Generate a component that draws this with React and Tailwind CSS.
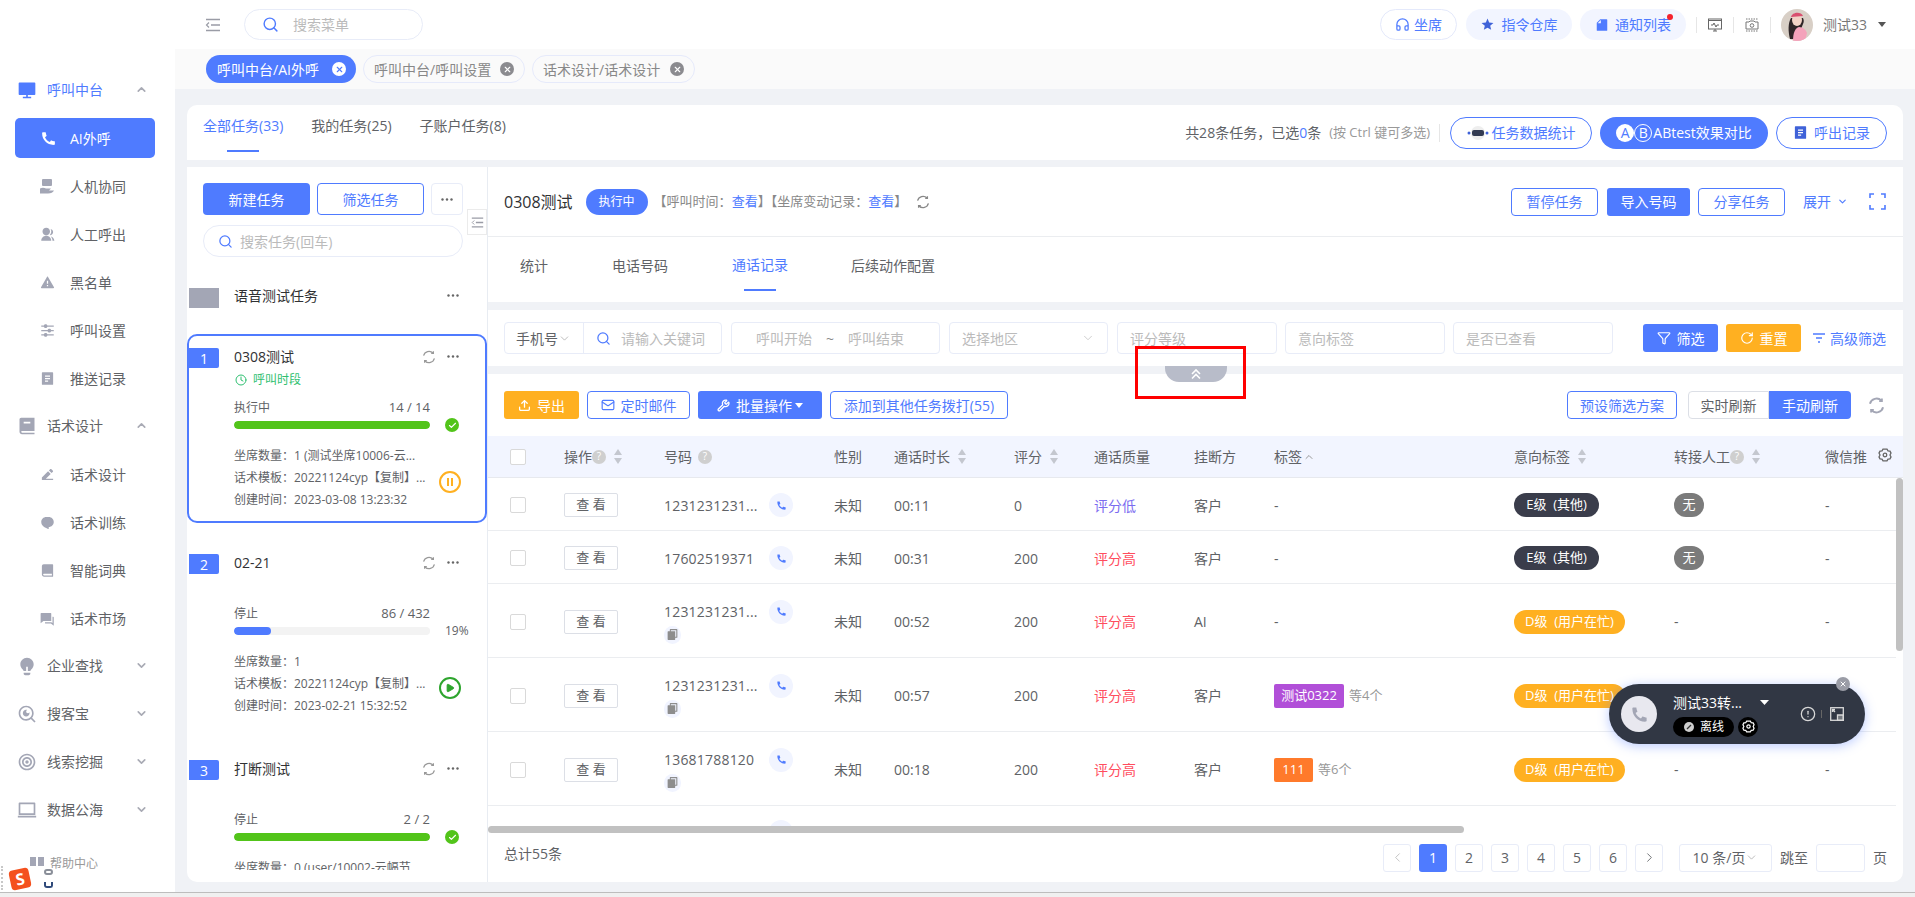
import React from "react";
import { Search, ChevronUp, ChevronDown, ChevronLeft, ChevronRight, X, Clock, Check, Play, Upload, Mail, Wrench, Filter, RotateCw, AlertCircle, Headphones } from "lucide-react";
import {
  RiComputerFill,
  RiPhoneFill,
  RiGroupFill,
  RiAlertFill,
  RiEqualizerFill,
  RiFileList2Fill,
  RiBook2Fill,
  RiEdit2Fill,
  RiChat1Fill,
  RiBookFill,
  RiQuestionAnswerFill,
  RiLightbulbFill,
  RiSearchEyeLine,
  RiFocus2Line,
  RiMacbookLine,
  RiStarSFill,
  RiFileFill,
  RiFileCopyFill,
} from "react-icons/ri";

const HandIcon = () => (
  <svg width="16" height="16" viewBox="0 0 16 16" fill="#a3a6b5">
    <rect x="3" y="1" width="10" height="7" rx="1" />
    <path d="M1 10.5c2-1 4-1 6 0h5l-2 2h5c-1 2-3 3-6 3H1z" />
  </svg>
);

const RefreshIcon = ({ size = 14, width = 1.2, color = "#999" }) => (
  <svg width={size} height={size} viewBox="0 0 14 14" fill="none" stroke={color} strokeWidth={width}>
    <path d="M1.6 5.6A5.6 5.6 0 0 1 11 3" />
    <path d="M12.4 8.4A5.6 5.6 0 0 1 3 11" />
    <path d="M11.4 1.2V3.4H9.2M2.6 12.8V10.6H4.8" />
  </svg>
);

const HexGear = ({ size = 14, color = "#666" }) => (
  <svg width={size} height={size} viewBox="0 0 14 14" fill="none" stroke={color} strokeWidth="1.3">
    <path d="M5 1.2h4l1 1.7 2 .2 1 2-1 1.9 1 1.9-1 2-2 .2-1 1.7H5l-1-1.7-2-.2-1-2L2 7 1 5.100l1-2 2-.2z" />
    <circle cx="7" cy="7" r="1.8" />
  </svg>
);

const menus = [
  { label: "呼叫中台", icon: RiComputerFill, top: true, color: "text-[#4f7bff]", open: true },
  { label: "AI外呼", icon: RiPhoneFill, active: true },
  { label: "人机协同", icon: HandIcon },
  { label: "人工呼出", icon: RiGroupFill },
  { label: "黑名单", icon: RiAlertFill },
  { label: "呼叫设置", icon: RiEqualizerFill },
  { label: "推送记录", icon: RiFileList2Fill },
  { label: "话术设计", icon: RiBook2Fill, top: true, open: true },
  { label: "话术设计", icon: RiEdit2Fill },
  { label: "话术训练", icon: RiChat1Fill },
  { label: "智能词典", icon: RiBookFill },
  { label: "话术市场", icon: RiQuestionAnswerFill },
  { label: "企业查找", icon: RiLightbulbFill, top: true },
  { label: "搜客宝", icon: RiSearchEyeLine, top: true },
  { label: "线索挖掘", icon: RiFocus2Line, top: true },
  { label: "数据公海", icon: RiMacbookLine, top: true },
];

const Sidebar = () => (
  <div className="w-[175px] h-full bg-white pt-[66px] flex flex-col shrink-0 text-[14px] text-[#606266]">
    {menus.map((m, i) => {
      const Icon = m.icon;
      if (m.active) {
        return (
          <div key={i} className="h-[48px] flex items-center">
            <div className="ml-[15px] w-[140px] h-[40px] rounded-[5px] bg-[#4f7bff] text-white flex items-center pl-[25px]">
              <Icon size={17} />
              <span className="ml-[13px]">{m.label}</span>
            </div>
          </div>
        );
      }
      if (m.top) {
        return (
          <div key={i} className={`h-[48px] flex items-center pl-[17px] pb-px ${m.color || ""}`}>
            <span className="w-[20px] flex justify-center">
              <Icon size={20} className={m.color ? "text-[#4f7bff]" : "text-[#a3a6b5]"} />
            </span>
            <span className="ml-[10px] w-[88px]">{m.label}</span>
            {m.open ? <ChevronUp size={13} strokeWidth={3} className="text-[#a9abb5]" /> : <ChevronDown size={13} strokeWidth={3} className="text-[#a9abb5]" />}
          </div>
        );
      }
      return (
        <div key={i} className="h-[48px] flex items-center pl-[39px]">
          <span className="w-[16px] flex justify-center">
            <Icon size={15} className="text-[#a3a6b5]" />
          </span>
          <span className="ml-[15px]">{m.label}</span>
        </div>
      );
    })}
    <div className="mt-[21px] ml-[30px] flex items-center text-[12px] text-[#999]">
      <span className="w-[6px] h-[9px] bg-[#a3a6b5] -mt-[6px]"></span>
      <span className="w-[6px] h-[9px] bg-[#a3a6b5] ml-[2px] -mt-[6px]"></span>
      <span className="ml-[6px]">帮助中心</span>
    </div>
  </div>
);

const CollapseIcon = ({ size = 16 }) => (
  <svg width={size} height={size} viewBox="0 0 16 16" fill="none" stroke="#9a9ca6" strokeWidth="1.6">
    <path d="M1 2.5h14M6 8h9M1 13.5h14" />
    <path d="M4 5.5L1.5 8 4 10.5" strokeWidth="1.2" />
  </svg>
);

const tabItems = [
  { label: "呼叫中台/AI外呼", w: "w-[150px]", pad: "pl-[11px]", active: true },
  { label: "呼叫中台/呼叫设置", w: "w-[162px]", pad: "pl-[10px]" },
  { label: "话术设计/话术设计", w: "w-[163px]", pad: "pl-[10px]" },
];

const TopBar = () => (
  <>
    <div className="h-[49px] bg-white flex items-center pl-[30px] pr-[29px] shrink-0">
      <CollapseIcon />
      <div className="ml-[23px] w-[179px] h-[31px] rounded-full border border-[#e8ecf8] flex items-center pl-[17px] text-[14px] text-[#bbbbbb]">
        <Search size={17} className="text-[#4f7bff]" />
        <span className="ml-[14px]">搜索菜单</span>
      </div>
      <div className="flex-1"></div>
      <div className="w-[77px] h-[31px] rounded-full border border-[#e4e9fb] flex items-center justify-center text-[14px] text-[#4f7bff]">
        <Headphones size={15} />
        <span className="ml-[4px]">坐席</span>
      </div>
      <div className="ml-[9px] w-[106px] h-[31px] rounded-full bg-[#f2f5ff] flex items-center justify-center text-[14px] text-[#4f7bff]">
        <RiStarSFill size={15} className="text-[#3f62d8]" />
        <span className="ml-[6px]">指令仓库</span>
      </div>
      <div className="ml-[8px] w-[106px] h-[31px] rounded-full bg-[#f2f5ff] flex items-center justify-center text-[14px] text-[#4f7bff] relative">
        <RiFileFill size={14} />
        <span className="ml-[6px]">通知列表</span>
        <span className="absolute right-[13px] top-[5px] w-[6px] h-[6px] rounded-full bg-[#f5222d]"></span>
      </div>
      <div className="ml-[10px] w-px h-[16px] bg-[#e6e6e6]"></div>
      <div className="w-[36px] flex justify-center">
        <svg width="14" height="14" viewBox="0 0 14 14" fill="none" stroke="#666" strokeWidth="1">
          <rect x="0.5" y="1" width="13" height="10" />
          <path d="M0.5 2.5h13M3 7h2l1-2 2 4 1-2h2M7 11v2M5 13h4" />
        </svg>
      </div>
      <div className="w-px h-[16px] bg-[#e6e6e6]"></div>
      <div className="w-[36px] flex justify-center">
        <svg width="14" height="14" viewBox="0 0 14 14" fill="none" stroke="#777" strokeWidth="1">
          <path d="M1 1h12M1 13h12" strokeDasharray="1.5 1" />
          <path d="M1 4h3l1-1h4l1 1h3v7H1z" />
          <circle cx="7" cy="7.5" r="1.8" />
        </svg>
      </div>
      <div className="w-px h-[16px] bg-[#e6e6e6]"></div>
      <div className="ml-[10px] w-[32px] h-[32px] rounded-full overflow-hidden">
        <svg width="32" height="32" viewBox="0 0 32 32">
          <rect width="32" height="32" fill="#d8cfc6" />
          <path d="M9 30c-2-8-2-16 1-21l12 0c1 2 1 4 0 6l-6 15z" fill="#2e2527" />
          <ellipse cx="16" cy="11" rx="5" ry="6" fill="#f2d3c6" />
          <path d="M10 8c1-5 10-6 12-1z" fill="#d9506f" />
          <path d="M12 32c0-8 2-13 6-14 4 0 7 3 8 6l-2 8z" fill="#f4a3bb" />
        </svg>
      </div>
      <span className="ml-[10px] text-[14px] text-[#777]">测试33</span>
      <svg className="ml-[11px]" width="8" height="5" viewBox="0 0 8 5" fill="#555"><path d="M0 0h8L4 5z" /></svg>
    </div>
    <div className="h-[40px] bg-[#fafafa] flex items-center pl-[31px] gap-[7px] shrink-0">
      {tabItems.map((t) => (
        <div
          key={t.label}
          className={`${t.w} ${t.pad} h-[28px] rounded-full flex items-center justify-between pr-[10px] text-[14px] ${
            t.active ? "bg-[#4f7bff] text-white" : "border border-[#e6eafa] text-[#888]"
          }`}
        >
          <span>{t.label}</span>
          <span className={`w-[14px] h-[14px] rounded-full flex items-center justify-center ${t.active ? "bg-white text-[#4f7bff]" : "bg-[#8b8b8f] text-white"}`}>
            <X size={9} strokeWidth={3} />
          </span>
        </div>
      ))}
    </div>
  </>
);

const PillButton = ({ w, filled, children }) => (
  <div className={`${w} h-[32px] rounded-full flex items-center justify-center text-[14px] ${filled ? "bg-[#4f7bff] text-white" : "border border-[#4f7bff] text-[#4f7bff]"}`}>
    {children}
  </div>
);

const TaskTabs = () => (
  <div className="h-[55px] bg-white rounded-t-[10px] flex items-start pl-[16px] pr-[16px] shrink-0 text-[14px] text-[#606266]">
    <div className="h-[47px] flex flex-col items-center">
      <span className="h-[40px] flex items-center text-[#4f7bff]">全部任务(33)</span>
      <span className="w-[32px] h-[2px] mt-[5px] bg-[#4f7bff]"></span>
    </div>
    <span className="ml-[28px] h-[40px] flex items-center">我的任务(25)</span>
    <span className="ml-[28px] h-[40px] flex items-center">子账户任务(8)</span>
    <div className="flex-1"></div>
    <div className="h-[55px] flex items-center">
      <span className="text-[#606266]">共28条任务，已选<span className="text-[#4f7bff]">0</span>条</span>
      <span className="ml-[8px] text-[13px] text-[#999]">(按 Ctrl 键可多选)</span>
      <span className="ml-[9px] mr-[10px] w-px h-[18px] bg-[#e6e6e6]"></span>
      <PillButton w="w-[142px]">
        <svg width="22" height="14" viewBox="0 0 22 14">
          <circle cx="11" cy="7" r="7" fill="#eeeeee" />
          <rect x="5" y="4" width="12" height="6" rx="2" fill="#333b52" />
          <circle cx="2" cy="7" r="1.5" fill="#3f62d8" />
          <circle cx="20" cy="7" r="1.5" fill="#3f62d8" />
        </svg>
        <span className="ml-[3px]">任务数据统计</span>
      </PillButton>
      <div className="w-[8px]"></div>
      <PillButton w="w-[168px]" filled>
        <span className="w-[18px] h-[18px] rounded-full bg-white text-[#4f7bff] flex items-center justify-center text-[14px]">A</span>
        <span className="w-[18px] h-[18px] rounded-full border border-white flex items-center justify-center text-[14px]">B</span>
        <span className="ml-px">ABtest效果对比</span>
      </PillButton>
      <div className="w-[8px]"></div>
      <PillButton w="w-[111px]">
        <RiFileList2Fill size={15} className="text-[#3f62d8]" />
        <span className="ml-[6px]">呼出记录</span>
      </PillButton>
    </div>
  </div>
);

const Dots = () => (
  <svg width="12" height="3" viewBox="0 0 12 3" fill="#666">
    <circle cx="1.5" cy="1.5" r="1.2" />
    <circle cx="6" cy="1.5" r="1.2" />
    <circle cx="10.5" cy="1.5" r="1.2" />
  </svg>
);

const tasks = [
  {
    no: 1,
    name: "0308测试",
    selected: true,
    state: "执行中",
    count: "14 / 14",
    percent: 100,
    color: "bg-[#52c41a]",
    line1: "坐席数量：1 (测试坐席10006-云...",
    line2: "话术模板：20221124cyp【复制】...",
    line3: "创建时间：2023-03-08 13:23:32",
    action: "pause",
  },
  {
    no: 2,
    name: "02-21",
    state: "停止",
    count: "86 / 432",
    percent: 19,
    color: "bg-[#4f7bff]",
    line1: "坐席数量：1",
    line2: "话术模板：20221124cyp【复制】...",
    line3: "创建时间：2023-02-21 15:32:52",
    action: "play",
  },
  {
    no: 3,
    name: "打断测试",
    state: "停止",
    count: "2 / 2",
    percent: 100,
    color: "bg-[#52c41a]",
    line1: "坐席数量：0 (user/10002-云幅节...",
    line2: "",
    line3: "",
  },
];

const TaskCard = ({ t }) => (
  <div className={`h-[189px] mb-[17px] rounded-[10px] border-2 pt-[12px] shrink-0 ${t.selected ? "border-[#4f7bff]" : "border-transparent"}`}>
    <div className="h-[20px] flex items-center pr-[26px]">
      <span className="w-[30px] h-[20px] rounded-r-[2px] bg-[#4f7bff] text-white text-[14px] flex items-center justify-center">{t.no}</span>
      <span className="ml-[15px] mb-[3px] flex-1 text-[14px] text-[#303133]">{t.name}</span>
      <span className="mr-[11px] mb-[2px]"><RefreshIcon /></span>
      <span className="mb-[3px] flex"><Dots /></span>
    </div>
    <div className="h-[20px] pl-[46px] pt-[4px] flex items-center text-[12px] text-[#2fbf71]">
      {t.selected && (
        <>
          <Clock size={12} />
          <span className="ml-[6px]">呼叫时段</span>
        </>
      )}
    </div>
    <div className="mt-[12px] pl-[45px] w-[241px] flex justify-between items-center h-[16px] text-[12px] text-[#606266]">
      <span>{t.state}</span>
      <span className="text-[13px]">{t.count}</span>
    </div>
    <div className="mt-[5px] pl-[45px] flex items-center h-[8px]">
      <div className="w-[196px] h-[8px] rounded-full bg-[#f3f3f3] overflow-hidden">
        <div className={`h-full rounded-full ${t.color}`} style={{ width: `${t.percent}%` }}></div>
      </div>
      {t.percent === 100 ? (
        <span className="ml-[15px] w-[14px] h-[14px] rounded-full bg-[#52c41a] text-white flex items-center justify-center">
          <Check size={9} strokeWidth={3} />
        </span>
      ) : (
        <span className="ml-[15px] text-[12px] text-[#606266]">{t.percent}%</span>
      )}
    </div>
    <div className="mt-[16px] pl-[45px] flex items-center">
      <div className="w-[205px] text-[12px] leading-[22px] text-[#606266] whitespace-nowrap">
        <div>{t.line1}</div>
        <div>{t.line2}</div>
        <div>{t.line3}</div>
      </div>
      {t.action === "pause" && (
        <span className="mt-[8px] w-[22px] h-[22px] rounded-full border-2 border-[#ffb021] flex items-center justify-center gap-[2px]">
          <span className="w-[2px] h-[8px] bg-[#ffb021]"></span>
          <span className="w-[2px] h-[8px] bg-[#ffb021]"></span>
        </span>
      )}
      {t.action === "play" && (
        <span className="mt-[8px] w-[22px] h-[22px] rounded-full border-2 border-[#2ea52e] text-[#2ea52e] flex items-center justify-center">
          <Play size={10} fill="#2ea52e" />
        </span>
      )}
    </div>
  </div>
);

const LeftPanel = () => (
  <div className="w-[300px] h-full bg-white rounded-bl-[10px] pt-[16px] shrink-0 relative flex flex-col">
    <div className="pl-[16px] flex gap-[7px] text-[14px]">
      <div className="w-[107px] h-[32px] rounded-[4px] bg-[#4f7bff] text-white flex items-center justify-center">新建任务</div>
      <div className="w-[107px] h-[32px] rounded-[4px] border border-[#4f7bff] text-[#4f7bff] flex items-center justify-center">筛选任务</div>
      <div className="w-[32px] h-[32px] rounded-[4px] border border-[#e8ecf8] flex items-center justify-center">
        <Dots />
      </div>
    </div>
    <div className="ml-[16px] mt-[10px] w-[260px] h-[32px] rounded-full border border-[#e8ecf8] flex items-center pl-[14px] text-[14px] text-[#bbbbbb]">
      <Search size={15} className="text-[#4f7bff]" />
      <span className="ml-[7px]">搜索任务(回车)</span>
    </div>
    <div className="absolute left-[280px] top-[42px] w-[20px] h-[26px] bg-white border border-[#ebebeb] flex items-center justify-center">
      <CollapseIcon size={13} />
    </div>
    <div className="mt-[19px] h-[42px] flex items-center pr-[28px] pb-[3px]">
      <span className="ml-[2px] w-[30px] h-[20px] bg-[#a3a6b5] mt-[5px]"></span>
      <span className="ml-[15px] flex-1 text-[14px] text-[#303133]">语音测试任务</span>
      <Dots />
    </div>
    <div className="mt-[16px] h-[536px] overflow-hidden flex flex-col">
      {tasks.map((t) => (
        <TaskCard key={t.no} t={t} />
      ))}
    </div>
  </div>
);

const Outline = ({ w, children }) => (
  <div className={`${w} h-[28px] rounded-[4px] border border-[#4f7bff] text-[#4f7bff] flex items-center justify-center text-[14px]`}>{children}</div>
);

const DetailHead = () => (
  <div className="h-[70px] bg-white border-b border-[#ebedf0] flex items-center pl-[16px] pr-[17px] shrink-0">
    <span className="text-[16px] text-[#303133]">0308测试</span>
    <span className="ml-[13px] w-[62px] h-[26px] rounded-full bg-[#4f7bff] text-white text-[12px] flex items-center justify-center">执行中</span>
    <span className="ml-[6px] text-[13px] text-[#888]">【呼叫时间：<span className="text-[#4f7bff]">查看</span>】【坐席变动记录：<span className="text-[#4f7bff]">查看</span>】</span>
    <span className="ml-[9px] flex"><RefreshIcon size={14} width={1.3} color="#888" /></span>
    <div className="flex-1"></div>
    <Outline w="w-[87px]">暂停任务</Outline>
    <div className="ml-[9px] w-[83px] h-[28px] rounded-[3px] bg-[#4f7bff] text-white text-[14px] flex items-center justify-center">导入号码</div>
    <div className="ml-[8px]"><Outline w="w-[87px]">分享任务</Outline></div>
    <span className="ml-[18px] text-[14px] text-[#4f7bff]">展开</span>
    <ChevronDown size={11} strokeWidth={2.5} className="ml-[6px] text-[#4f7bff]" />
    <div className="ml-[21px] text-[#4f7bff]">
      <svg width="17" height="17" viewBox="0 0 17 17" fill="none" stroke="#4f7bff" strokeWidth="1.6">
        <path d="M1 5V1h4M12 1h4v4M16 12v4h-4M5 16H1v-4" />
      </svg>
    </div>
  </div>
);

const DetailTabs = () => (
  <div className="h-[65px] bg-white flex items-start shrink-0 text-[14px] text-[#606266]">
    <span className="ml-[32px] w-[28px] h-[55px] pt-[2px] flex items-center">统计</span>
    <span className="ml-[64px] w-[56px] h-[55px] pt-[2px] flex items-center">电话号码</span>
    <div className="ml-[64px] w-[56px] flex flex-col items-center text-[#4f7bff]">
      <span className="h-[52px] pt-[2px] flex items-center">通话记录</span>
      <span className="w-[32px] h-[2px] bg-[#4f7bff]"></span>
    </div>
    <span className="ml-[63px] h-[55px] pt-[2px] flex items-center">后续动作配置</span>
  </div>
);

const Field = ({ w, children, arrow }) => (
  <div className={`${w} h-[32px] rounded-[4px] border border-[#e8ecf8] flex items-center justify-between px-[12px] text-[14px] text-[#bbbbbb]`}>
    <span>{children}</span>
    {arrow && <ChevronDown size={14} strokeWidth={1.2} />}
  </div>
);

const FilterBar = () => (
  <div className="mt-[8px] h-[56px] bg-white flex items-center pl-[16px] pr-[17px] shrink-0">
    <div className="w-[218px] h-[32px] rounded-[4px] border border-[#e8ecf8] flex items-center text-[14px] text-[#bbbbbb]">
      <div className="w-[79px] h-full border-r border-[#e8ecf8] flex items-center pl-[11px] text-[#606266]">
        手机号<ChevronDown size={13} strokeWidth={1.2} className="text-[#999]" />
      </div>
      <Search size={15} className="ml-[12px] text-[#4f7bff]" />
      <span className="ml-[10px]">请输入关键词</span>
    </div>
    <div className="ml-[9px] w-[209px] h-[32px] rounded-[4px] border border-[#e8ecf8] flex items-center pl-[24px] text-[14px] text-[#bbbbbb]">
      呼叫开始<span className="mx-[14px] text-[#888]">~</span>呼叫结束
    </div>
    <div className="ml-[9px]"><Field w="w-[159px]" arrow>选择地区</Field></div>
    <div className="ml-[9px]"><Field w="w-[160px]">评分等级</Field></div>
    <div className="ml-[8px]"><Field w="w-[160px]">意向标签</Field></div>
    <div className="ml-[8px]"><Field w="w-[160px]">是否已查看</Field></div>
    <div className="flex-1"></div>
    <div className="w-[75px] h-[28px] rounded-[3px] bg-[#4f7bff] text-white text-[14px] flex items-center justify-center">
      <Filter size={14} />
      <span className="ml-[6px]">筛选</span>
    </div>
    <div className="ml-[8px] w-[75px] h-[28px] rounded-[3px] bg-[#ffb021] text-white text-[14px] flex items-center justify-center">
      <RotateCw size={14} />
      <span className="ml-[6px]">重置</span>
    </div>
    <svg className="ml-[12px]" width="12" height="10" viewBox="0 0 12 10" fill="none" stroke="#4f7bff" strokeWidth="1.4">
      <path d="M0 1h12M3 5h6M5 9h2" />
    </svg>
    <span className="ml-[5px] text-[14px] text-[#4f7bff]">高级筛选</span>
  </div>
);

const ToolBar = () => (
  <div className="h-[62px] bg-white flex items-center pl-[16px] pr-[18px] shrink-0 text-[14px]">
    <div className="w-[75px] h-[28px] rounded-[3px] bg-[#ffb021] text-white flex items-center justify-center">
      <Upload size={13} strokeWidth={2.4} />
      <span className="ml-[6px]">导出</span>
    </div>
    <div className="ml-[8px]">
      <Outline w="w-[103px]">
        <Mail size={14} />
        <span className="ml-[6px]">定时邮件</span>
      </Outline>
    </div>
    <div className="ml-[8px] w-[124px] h-[28px] rounded-[3px] bg-[#4f7bff] text-white flex items-center justify-center">
      <Wrench size={13} strokeWidth={2.4} />
      <span className="ml-[6px]">批量操作</span>
      <svg className="ml-[3px]" width="8" height="5" viewBox="0 0 8 5" fill="#fff"><path d="M0 0h8L4 5z" /></svg>
    </div>
    <div className="ml-[8px]"><Outline w="w-[178px]">添加到其他任务拨打(55)</Outline></div>
    <div className="flex-1"></div>
    <Outline w="w-[110px]">预设筛选方案</Outline>
    <div className="ml-[11px] w-[81px] h-[28px] rounded-l-[4px] border border-[#dcdfe6] text-[#606266] flex items-center justify-center">实时刷新</div>
    <div className="w-[82px] h-[28px] rounded-r-[4px] bg-[#4f7bff] text-white flex items-center justify-center">手动刷新</div>
    <span className="ml-[17px] flex"><RefreshIcon size={17} width={1.6} color="#a3a6b5" /></span>
  </div>
);

const Help = () => (
  <span className="w-[14px] h-[14px] rounded-full bg-[#cfcfcf] text-white text-[10px] flex items-center justify-center">?</span>
);

const Sort = () => (
  <svg className="ml-[8px]" width="8" height="15" viewBox="0 0 8 15" fill="#c4c7cf">
    <path d="M4 0l4 6H0zM0 9h8l-4 6z" />
  </svg>
);

const colGrid = "grid grid-cols-[22px_54px_100px_170px_60px_120px_80px_100px_80px_240px_160px_151px_71px]";

const TableHead = () => (
  <div className={`${colGrid} h-[42px] items-center bg-[#f2f5ff] border-b border-[#e7e9ee] text-[14px] text-[#606266] shrink-0`}>
    <span></span>
    <span className="w-[16px] h-[16px] rounded-[2px] border border-[#d9d9d9] bg-white"></span>
    <span className="flex items-center">操作<Help /><Sort /></span>
    <span className="flex items-center">号码<span className="ml-[6px]"><Help /></span></span>
    <span>性别</span>
    <span className="flex items-center">通话时长<Sort /></span>
    <span className="flex items-center">评分<Sort /></span>
    <span>通话质量</span>
    <span>挂断方</span>
    <span className="flex items-center">标签<ChevronUp size={12} className="ml-[1px] text-[#999]" /></span>
    <span className="flex items-center">意向标签<Sort /></span>
    <span className="flex items-center">转接人工<Help /><Sort /></span>
    <span className="flex items-center justify-between pr-[4px]">微信推<span className="mb-[4px] flex"><HexGear size={14} /></span></span>
  </div>
);

const rows = [
  { phone: "1231231231...", dur: "00:11", score: "0", q: "评分低", by: "客户", intent: "E", transfer: true, h: "h-[53px]" },
  { phone: "17602519371", dur: "00:31", score: "200", q: "评分高", by: "客户", intent: "E", transfer: true, h: "h-[53px]" },
  { phone: "1231231231...", dur: "00:52", score: "200", q: "评分高", by: "AI", intent: "D", copy: true, h: "h-[74px]" },
  { phone: "1231231231...", dur: "00:57", score: "200", q: "评分高", by: "客户", intent: "D", copy: true, tag: "测试0322", tagCls: "w-[70px] bg-[#b14fd8]", more: "等4个", h: "h-[74px]" },
  { phone: "13681788120", dur: "00:18", score: "200", q: "评分高", by: "客户", intent: "D", copy: true, tag: "111", tagCls: "w-[39px] bg-[#ff7a2b]", more: "等6个", h: "h-[74px]" },
];

const Row = ({ r }) => (
  <div className={`${colGrid} ${r.h} pt-[2px] items-center border-b border-[#ebedf0] text-[14px] text-[#606266] shrink-0`}>
    <span></span>
    <span className="w-[16px] h-[16px] rounded-[2px] border border-[#d9d9d9] bg-white"></span>
    <span className="w-[54px] h-[24px] rounded-[2px] border border-[#dcdfe6] text-[13px] flex items-center justify-center">查 看</span>
    <div>
      <div className="flex items-center h-[24px]">
        <span className="w-[105px] tracking-[0.2px] whitespace-nowrap">{r.phone}</span>
        <span className="w-[24px] h-[24px] rounded-full bg-[#f1f4ff] text-[#4f7bff] flex items-center justify-center">
          <RiPhoneFill size={11} />
        </span>
      </div>
      {r.copy && (
        <span className="mt-[2px] w-[17px] h-[18px] rounded-full bg-[#f1f4ff] text-[#8d8d8d] flex items-center justify-center">
          <RiFileCopyFill size={13} />
        </span>
      )}
    </div>
    <span>未知</span>
    <span>{r.dur}</span>
    <span>{r.score}</span>
    <span className={r.q === "评分低" ? "text-[#7b6cf0]" : "text-[#ff4d5e]"}>{r.q}</span>
    <span>{r.by}</span>
    <span className="flex items-center">
      {r.tag ? (
        <>
          <span className={`${r.tagCls} h-[24px] rounded-[2px] text-white text-[13px] flex items-center justify-center`}>{r.tag}</span>
          <span className="ml-[5px] text-[13px] text-[#999]">{r.more}</span>
        </>
      ) : (
        "-"
      )}
    </span>
    <span className="flex">
      {r.intent === "E" ? (
        <span className="w-[85px] h-[24px] rounded-full bg-[#3a3d4b] text-white text-[13px] whitespace-pre flex items-center justify-center">E级  (其他)</span>
      ) : (
        <span className="w-[111px] h-[24px] rounded-full bg-[#ffb021] text-white text-[13px] whitespace-pre flex items-center justify-center">D级  (用户在忙)</span>
      )}
    </span>
    <span className="flex">
      {r.transfer ? <span className="w-[30px] h-[24px] rounded-full bg-[#7b7b7b] text-white text-[13px] flex items-center justify-center">无</span> : "-"}
    </span>
    <span>-</span>
  </div>
);

const Pager = () => (
  <div className="h-[49px] bg-white flex items-center pl-[16px] pr-[16px] rounded-br-[10px] shrink-0 text-[14px] text-[#606266]">
    <span className="mb-[8px]">总计55条</span>
    <div className="flex-1"></div>
    <span className="w-[28px] h-[28px] rounded-[3px] border border-[#e8ecf8] text-[#bbb] flex items-center justify-center"><ChevronLeft size={15} strokeWidth={1.4} /></span>
    {[1, 2, 3, 4, 5, 6].map((n) => (
      <span key={n} className={`ml-[8px] w-[28px] h-[28px] rounded-[3px] flex items-center justify-center ${n === 1 ? "bg-[#4f7bff] text-white" : "border border-[#e8ecf8]"}`}>{n}</span>
    ))}
    <span className="ml-[8px] w-[28px] h-[28px] rounded-[3px] border border-[#e8ecf8] flex items-center justify-center"><ChevronRight size={15} strokeWidth={1.4} /></span>
    <span className="ml-[16px] w-[93px] h-[28px] rounded-[3px] border border-[#e8ecf8] flex items-center justify-center">
      10 条/页<ChevronDown size={13} strokeWidth={1.2} className="text-[#999]" />
    </span>
    <span className="ml-[8px]">跳至</span>
    <span className="ml-[8px] w-[49px] h-[28px] rounded-[3px] border border-[#e8ecf8]"></span>
    <span className="ml-[8px]">页</span>
  </div>
);

const CallWidget = () => (
  <div className="absolute left-[1609px] top-[684px] w-[256px] h-[60px] rounded-full bg-[#313744] shadow-[0_2px_12px_rgba(79,123,255,0.4)] flex items-center pl-[12px] text-white">
    <span className="w-[36px] h-[36px] rounded-full bg-[#e8e8ef] text-[#a3a6b5] flex items-center justify-center">
      <RiPhoneFill size={19} />
    </span>
    <div className="ml-[16px] w-[114px]">
      <div className="flex items-center h-[22px] text-[14px]">
        <span>测试33转...</span>
        <svg className="ml-[18px]" width="9" height="5" viewBox="0 0 9 5" fill="#fff"><path d="M0 0h9L4.5 5z" /></svg>
      </div>
      <div className="mt-[3px] flex items-center">
        <span className="w-[61px] h-[20px] rounded-full bg-black flex items-center pl-[11px] text-[12px]">
          <svg className="mr-[6px]" width="10" height="10" viewBox="0 0 10 10">
            <circle cx="5" cy="5" r="5" fill="#cfcfcf" />
            <path d="M3 7l4-4" stroke="#333" strokeWidth="1.2" />
          </svg>
          离线
        </span>
        <span className="ml-[4px] w-[20px] h-[20px] rounded-full bg-black flex items-center justify-center">
          <HexGear size={13} color="#fff" />
        </span>
      </div>
    </div>
    <AlertCircle size={16} strokeWidth={1.9} className="ml-[13px] text-[#d8d8d8]" />
    <span className="ml-[5px] w-px h-[8px] bg-[#666]"></span>
    <svg className="ml-[8px]" width="14" height="14" viewBox="0 0 14 14" fill="none" stroke="#d8d8d8" strokeWidth="1.3">
      <rect x="0.7" y="0.7" width="12.600" height="12.600" />
      <path d="M7.500 8h5.800v5.300H7.500z" fill="#d8d8d8" fillOpacity="0.4" />
      <path d="M2.500 2.500l2.500 2.500M2.500 5V2.500H5" />
    </svg>
    <span className="absolute right-[15px] top-[-7px] w-[14px] h-[14px] rounded-full bg-[#9a9ca6] flex items-center justify-center">
      <X size={8} strokeWidth={3} />
    </span>
  </div>
);

const App = () => (
  <div className="w-[1915px] h-[897px] relative overflow-hidden flex flex-col bg-[#f0f0f0] font-['Open_Sans','Noto_Sans_CJK_SC',sans-serif]">
    <div className="h-[892px] flex shrink-0">
      <Sidebar />
      <div className="flex-1 min-w-0 bg-[#f0f2f6] flex flex-col">
        <TopBar />
        <div className="ml-[12px] mr-[12px] mt-[16px] flex flex-col">
          <TaskTabs />
          <div className="mt-[7px] h-[715px] flex">
            <LeftPanel />
            <div className="flex-1 min-w-0 border-l border-[#e8ecf2] flex flex-col">
              <DetailHead />
              <DetailTabs />
              <FilterBar />
              <div className="mt-[8px] flex-1 min-h-0 flex flex-col">
                <ToolBar />
                <TableHead />
                <div className="h-[348px] flex bg-white overflow-hidden shrink-0">
                  <div className="flex-1 min-w-0">
                    {rows.map((r, i) => (
                      <Row key={i} r={r} />
                    ))}
                    <div className={`${colGrid} h-[40px]`}>
                      <span></span><span></span><span></span>
                      <div className="flex justify-end pr-[41px] pt-[14px]">
                        <span className="w-[24px] h-[24px] rounded-full bg-[#f1f4ff]"></span>
                      </div>
                    </div>
                  </div>
                  <div className="w-[7px] shrink-0">
                    <div className="h-[173px] rounded-full bg-[#c1c1c1]"></div>
                  </div>
                </div>
                <div className="h-[7px] bg-white shrink-0">
                  <div className="w-[976px] h-[7px] rounded-full bg-[#c1c1c1]"></div>
                </div>
                <Pager />
              </div>
            </div>
          </div>
        </div>
      </div>
    </div>
    <div className="flex-1 border-t border-[#bdbdbd]"></div>

    {/* folded handle and the red mark lying over the filter bar */}
    <div className="absolute left-[1165px] top-[366px] w-[62px] h-[16px] rounded-b-[14px] bg-[#b8bcc9] flex items-center justify-center text-white">
      <svg width="12" height="12" viewBox="0 0 12 12" fill="none" stroke="#fff" strokeWidth="1.6">
        <path d="M2 6l4-4 4 4M2 10.5l4-4 4 4" />
      </svg>
    </div>
    <div className="absolute left-[1135px] top-[346px] w-[111px] h-[53px] border-[3px] border-[#ff0000]"></div>

    <CallWidget />

    {/* sogou input bar fragments at the corner */}
    <div className="absolute left-[1px] top-[866px] h-[24px] border-l-2 border-dotted border-[#c8c8c8]"></div>
    <div className="absolute left-[10px] top-[869px] w-[20px] h-[20px] rounded-[4px] bg-[#f4511e] text-white text-[16px] font-bold flex items-center justify-center -rotate-12">S</div>
    <div className="absolute left-[44px] top-[869px] w-[9px] h-[6px] rounded-full border-2 border-[#8a8f99]"></div>
    <div className="absolute left-[44px] top-[882px] w-[9px] h-[6px] rounded-b-[3px] border-2 border-t-0 border-[#2f4a7a]"></div>
  </div>
);

export default App;
